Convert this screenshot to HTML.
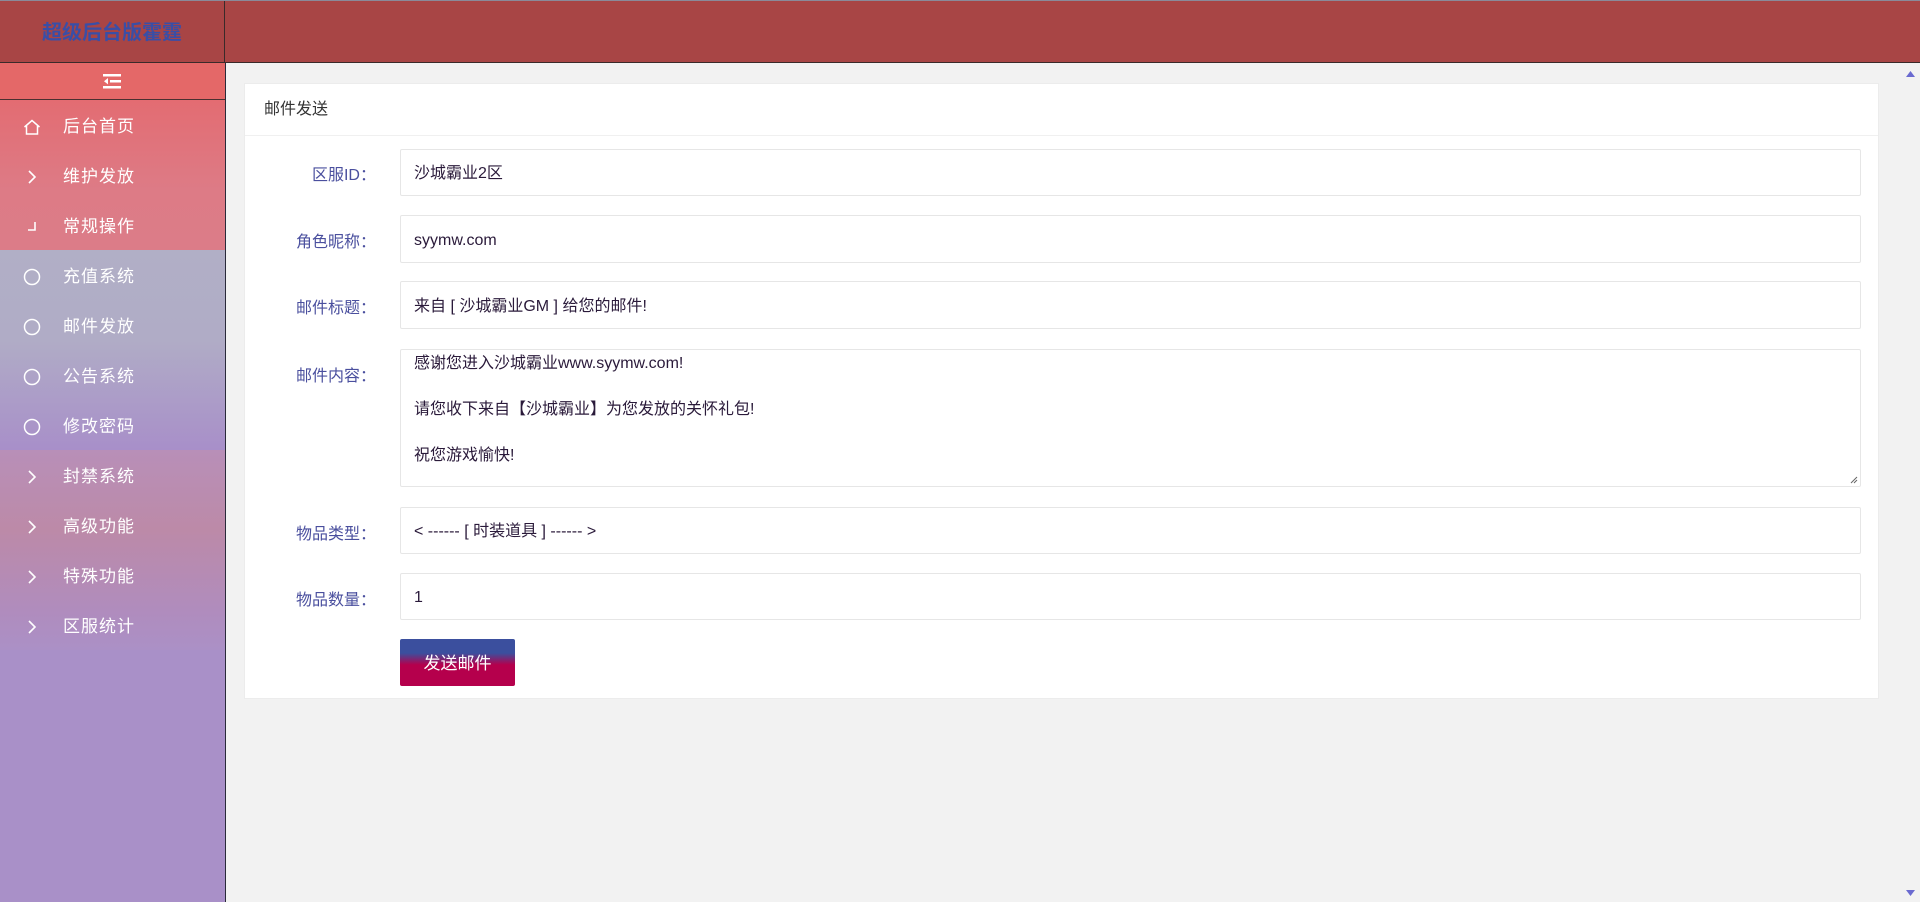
<!DOCTYPE html>
<html><head><meta charset="utf-8"><style>
*{box-sizing:border-box;margin:0;padding:0}
body{width:1920px;height:902px;overflow:hidden;background:#f2f2f2;font-family:"Liberation Sans","Noto Sans CJK SC",sans-serif;position:relative}
.top{position:absolute;left:0;top:0;width:1920px;height:63px;background:#a84545;border-top:1px solid #8a8a9a;border-bottom:1px solid #3a2a2a}
.logo{position:absolute;left:0;top:0;width:225px;height:62px;border-right:1px solid #3a2a2a;color:#3a4ea6;font-weight:bold;font-size:20px;text-align:center;line-height:64px}
.side{position:absolute;left:0;top:63px;width:226px;height:839px;background:#a990c8;border-right:1px solid #2a2a3a}
.tog{height:37px;background:#e46868;border-bottom:1px solid #4a3030;position:relative}
.item{height:50px;color:#fff;font-size:17px;line-height:54px;padding-left:63px;position:relative;letter-spacing:1px}
.ic{position:absolute;left:22px;top:2px;width:20px;height:50px;display:flex;align-items:center;justify-content:center}
.card{position:absolute;left:244px;top:83px;width:1635px;height:616px;background:#fff;border:1px solid #ececec}
.ch{height:52px;border-bottom:1px solid #f0f0f0;padding-left:19px;line-height:52px;font-size:16px;color:#333}
.lbl{position:absolute;width:134px;left:242px;text-align:right;font-size:16px;color:#4a4f9e}
.inp{position:absolute;left:400px;width:1461px;border:1px solid #e6e6e6;border-radius:2px;font-size:16px;color:#2a1a3a;padding-left:13px}
.btn{position:absolute;left:400px;top:639px;width:115px;height:47px;border-radius:2px;background:linear-gradient(#3b4f9e 0,#3b4f9e 30%,#b5004c 55%,#b5004c);color:#fff;font-size:17px;text-align:center;line-height:50px}
.sb{position:absolute;right:0;top:63px;width:20px;height:839px;background:#f2f2f2}
</style></head><body>
<div class="top"><div class="logo">超级后台版霍霆</div></div>
<div class="side">
<div class="tog"><svg style="position:absolute;left:103px;top:10px" width="18" height="16" viewBox="0 0 18 16"><rect x="0" y="1" width="18" height="2.5" fill="#fff"/><rect x="7" y="7" width="11" height="2.5" fill="#fff"/><rect x="0" y="13" width="18" height="2.5" fill="#fff"/><path d="M5 5 L1 8.2 L5 11.4Z" fill="#fff"/></svg></div>
<div style="background:linear-gradient(#e36c72,#dd7b86 60%,#dc7c88)">
<div class="item"><span class="ic"><svg width="18" height="16" viewBox="0 0 18 16"><path d="M1.5 8 L9 1.5 L16.5 8 M3.5 6.5 V15 H14.5 V6.5" fill="none" stroke="#fff" stroke-width="1.5"/></svg></span>后台首页</div>
<div class="item"><span class="ic"><svg width="10" height="14" viewBox="0 0 10 14"><path d="M2 1 L8 7 L2 13" fill="none" stroke="#fff" stroke-width="1.6"/></svg></span>维护发放</div>
<div class="item"><span class="ic"><svg width="12" height="12" viewBox="0 0 12 12"><path d="M9 1 V9 H2" fill="none" stroke="#fff" stroke-width="1.6"/></svg></span>常规操作</div>
</div>
<div style="background:linear-gradient(#b1afc6,#b0acc6 45%,#a88fc9 100%)">
<div class="item"><span class="ic"><svg width="18" height="18"><circle cx="9" cy="9" r="7.5" fill="none" stroke="#fff" stroke-width="1.5"/></svg></span>充值系统</div>
<div class="item"><span class="ic"><svg width="18" height="18"><circle cx="9" cy="9" r="7.5" fill="none" stroke="#fff" stroke-width="1.5"/></svg></span>邮件发放</div>
<div class="item"><span class="ic"><svg width="18" height="18"><circle cx="9" cy="9" r="7.5" fill="none" stroke="#fff" stroke-width="1.5"/></svg></span>公告系统</div>
<div class="item"><span class="ic"><svg width="18" height="18"><circle cx="9" cy="9" r="7.5" fill="none" stroke="#fff" stroke-width="1.5"/></svg></span>修改密码</div>
</div>
<div style="background:linear-gradient(#b88fb8,#bc8aa8 40%,#b08cbd 80%,#ab90c6)">
<div class="item"><span class="ic"><svg width="10" height="14" viewBox="0 0 10 14"><path d="M2 1 L8 7 L2 13" fill="none" stroke="#fff" stroke-width="1.6"/></svg></span>封禁系统</div>
<div class="item"><span class="ic"><svg width="10" height="14" viewBox="0 0 10 14"><path d="M2 1 L8 7 L2 13" fill="none" stroke="#fff" stroke-width="1.6"/></svg></span>高级功能</div>
<div class="item"><span class="ic"><svg width="10" height="14" viewBox="0 0 10 14"><path d="M2 1 L8 7 L2 13" fill="none" stroke="#fff" stroke-width="1.6"/></svg></span>特殊功能</div>
<div class="item"><span class="ic"><svg width="10" height="14" viewBox="0 0 10 14"><path d="M2 1 L8 7 L2 13" fill="none" stroke="#fff" stroke-width="1.6"/></svg></span>区服统计</div>
</div>
</div>
<div class="card"><div class="ch">邮件发送</div></div>
<div class="lbl" style="top:161px">区服ID：</div>
<div class="inp" style="top:149px;height:47px;line-height:48px">沙城霸业2区</div>
<div class="lbl" style="top:228px">角色昵称：</div>
<div class="inp" style="top:215px;height:48px;line-height:49px">syymw.com</div>
<div class="lbl" style="top:294px">邮件标题：</div>
<div class="inp" style="top:281px;height:48px;line-height:49px">来自 [ 沙城霸业GM ] 给您的邮件!</div>
<div class="lbl" style="top:362px">邮件内容：</div>
<div class="inp" style="top:349px;height:138px;line-height:23px;padding-top:2px">感谢您进入沙城霸业www.syymw.com!<br><br>请您收下来自【沙城霸业】为您发放的关怀礼包!<br><br>祝您游戏愉快!
<svg style="position:absolute;right:2px;bottom:2px" width="9" height="9"><path d="M8 2 L2 8 M8 5 L5 8" stroke="#666" stroke-width="1"/></svg></div>
<div class="lbl" style="top:520px">物品类型：</div>
<div class="inp" style="top:507px;height:47px;line-height:48px">&lt; ------ [ 时装道具 ] ------ &gt;</div>
<div class="lbl" style="top:586px">物品数量：</div>
<div class="inp" style="top:573px;height:47px;line-height:48px">1</div>
<div class="btn">发送邮件</div>
<div class="sb"><svg style="position:absolute;left:6px;top:8px" width="9" height="6"><path d="M0 6 L4.5 0 L9 6Z" fill="#6a6ad0"/></svg><svg style="position:absolute;left:6px;bottom:6px" width="9" height="6"><path d="M0 0 L4.5 6 L9 0Z" fill="#6a6ad0"/></svg></div>
</body></html>
